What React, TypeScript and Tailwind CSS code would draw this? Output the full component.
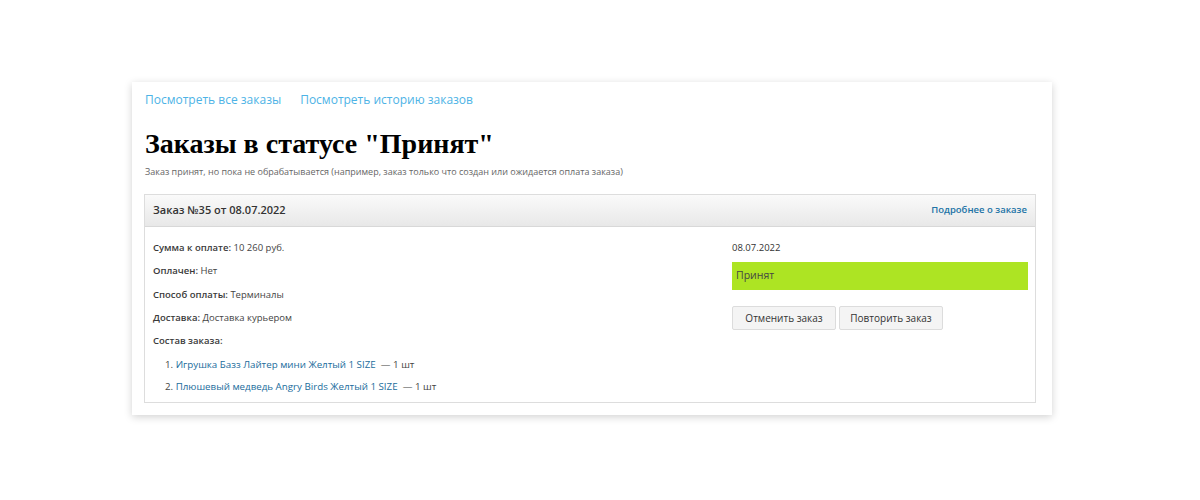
// Order list page: orders with status "Принят"

const items = [
  { name: 'Игрушка Базз Лайтер мини Желтый 1 SIZE', qty: '1 шт' },
  { name: 'Плюшевый медведь Angry Birds Желтый 1 SIZE', qty: '1 шт' },
];

const info = [
  { label: 'Сумма к оплате:', value: '10 260 руб.' },
  { label: 'Оплачен:', value: 'Нет' },
  { label: 'Способ оплаты:', value: 'Терминалы' },
  { label: 'Доставка:', value: 'Доставка курьером' },
];

export default function App() {
  return (
    <div className="w-[1200px] h-[500px] bg-white pt-[82px] font-['Open_Sans',sans-serif]">
      <div className="ml-[132px] w-[920px] bg-white shadow-[0_2px_8px_rgba(0,0,0,0.18)] pl-[12px] pr-[16px] pt-[9px] pb-[12px]">
        {/* top links */}
        <div className="flex gap-[19px] pl-[1px] text-[12px] leading-[18px] text-[#4db3e6]">
          <a href="#">Посмотреть все заказы</a>
          <a href="#">Посмотреть историю заказов</a>
        </div>

        <h1 className="mt-[18px] pl-[1px] font-['Liberation_Serif',serif] font-bold text-[28px] leading-[34px] text-black">
          Заказы в статусе "Принят"
        </h1>
        <p className="mt-[4px] pl-[1px] text-[9px] leading-[14px] text-[#666]">
          Заказ принят, но пока не обрабатывается (например, заказ только что создан или ожидается оплата заказа)
        </p>

        {/* order box */}
        <div className="mt-[15px] border border-[#ddd]">
          <div className="h-[32px] flex items-center justify-between px-[8px] bg-gradient-to-b from-[#fafafa] to-[#e8e8e8] border-b border-[#d8d8d8]">
            <span className="text-[11px] font-semibold text-[#333]">Заказ №35 от 08.07.2022</span>
            <a href="#" className="text-[9.5px] font-semibold text-[#2173a6]">Подробнее о заказе</a>
          </div>

          <div className="flex pl-[8px] pr-[7px] pt-[14px]">
            <div className="flex-1 text-[9.5px] text-[#444]">
              {info.map((row) => (
                <div key={row.label} className="leading-[14px] mb-[9.3px]">
                  <span className="font-semibold text-[#3a3a3a]">{row.label}</span> {row.value}
                </div>
              ))}
              <div className="leading-[14px] font-semibold text-[#3a3a3a]">Состав заказа:</div>
              <ol className="mt-[10px] pl-[12px] text-[9.75px]">
                {items.map((it, i) => (
                  <li key={it.name} className="leading-[14px] mb-[8px]">
                    {i + 1}. <a href="#" className="text-[#1a6c9c]">{it.name}</a>
                    &nbsp; — {it.qty}
                  </li>
                ))}
              </ol>
            </div>

            <div className="w-[296px] text-[9.5px]">
              <div className="leading-[14px] text-[#333]">08.07.2022</div>
              <div className="mt-[7px] h-[28px] flex items-center px-[4px] bg-[#ade423] text-[10.5px] text-[#444]">
                Принят
              </div>
              <div className="mt-[16px] flex gap-[3px]">
                <button className="w-[104px] h-[24px] bg-[#f4f4f4] border border-[#dcdcdc] rounded-[2px] text-[10px] text-[#333]">
                  Отменить заказ
                </button>
                <button className="w-[104px] h-[24px] bg-[#f4f4f4] border border-[#dcdcdc] rounded-[2px] text-[10px] text-[#333]">
                  Повторить заказ
                </button>
              </div>
            </div>
          </div>
        </div>
      </div>
    </div>
  );
}
